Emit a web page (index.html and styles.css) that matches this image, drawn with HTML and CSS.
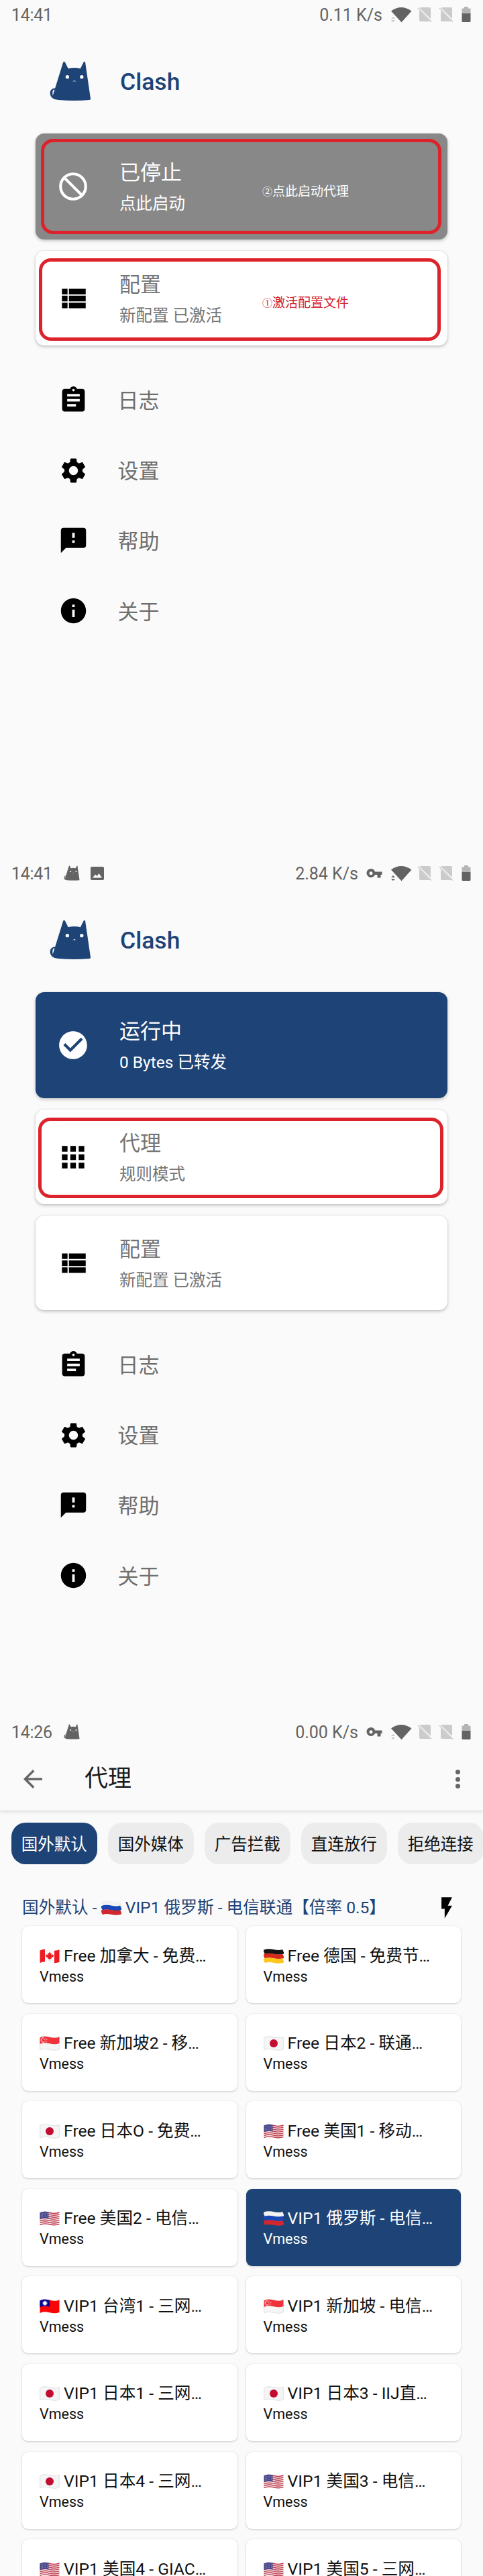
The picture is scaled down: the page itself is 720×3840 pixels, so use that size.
FILE: index.html
```html
<!DOCTYPE html>
<html lang="zh-CN">
<head>
<meta charset="utf-8">
<title>Clash</title>
<link rel="stylesheet" href="styles.css">
</head>
<body>
<svg class="sprite" aria-hidden="true">
  <symbol id="cat" viewBox="222 300 188 182">
    <path fill="currentColor" d="M283 306Q287 299 292 306L306 334Q334 327 361 334L375 306Q380 299 383 306L388 340 407 470Q408 475 402 476 335 482 262 476C236 474 224 462 224 445 224 430 236 421 248 423 252 425 246 429 238 431 234 438 235 447 236 457 246 461 260 461Q264 390 275 335Z"/>
    <circle cx="302" cy="372" r="8" fill="#fafafa"/><circle cx="367" cy="372" r="8" fill="#fafafa"/>
    <path fill="#fafafa" d="M324 392Q332 391 334 387 336 391 344 392Z"/>
  </symbol>
  <symbol id="image" viewBox="0 0 20 20"><path fill="currentColor" fill-rule="evenodd" d="M2 0h16q2 0 2 2v16q0 2-2 2H2q-2 0-2-2V2q0-2 2-2zM3 16.5h14L12.5 10 9.500 14 7 11.500z"/></symbol>
  <symbol id="key" viewBox="0 0 24 14"><path fill="currentColor" fill-rule="evenodd" d="M7 0a6.500 6.500 0 0 1 6 4.500h10.500v4.500h-2v4.500h-5V9H13A6.500 6.500 0 1 1 7 0zm0 4.200a2.500 2.500 0 1 0 0 5 2.500 2.500 0 0 0 0-5z"/></symbol>
  <symbol id="signals" viewBox="580 9 124 24">
    <path fill="#636363" d="M583 15.500Q598 4.500 613.500 15.500L598.500 32.300z"/>
    <g fill="#cbcbcb"><path d="M628 10h12q2 0 2 2v15l-17-16.500zM625 14.500l16.500 16.500H627q-2 0-2-2z"/><path d="M623 11l20 20.500" stroke="#cbcbcb" stroke-width="1.500"/>
    <path d="M660 10h12q2 0 2 2v15l-17-16.500zM657 14.500l16.500 16.500H659q-2 0-2-2z"/><path d="M655 11l20 20.500" stroke="#cbcbcb" stroke-width="1.500"/></g>
    <path fill="#b5b5b5" d="M692 9h6v2.500h3.500V20h-13v-8.500h3.500z"/><path fill="#636363" d="M688.500 19h13v11.500q0 1.500-1.500 1.500h-10q-1.500 0-1.500-1.500z"/>
  </symbol>
  <symbol id="traffic" viewBox="0 0 6 8"><path fill="currentColor" d="M0 3l3-3 3 3zM0 5h6L3 8z"/></symbol>
  <symbol id="block" viewBox="0 0 24 24"><circle cx="12" cy="12" r="9" fill="none" stroke="currentColor" stroke-width="2"/><path d="M5.700 5.700l12.600 12.600" stroke="currentColor" stroke-width="2"/></symbol>
  <symbol id="check" viewBox="0 0 24 24"><path fill="currentColor" d="M12 2C6.480 2 2 6.480 2 12s4.480 10 10 10 10-4.480 10-10S17.520 2 12 2zm-2 15l-5-5 1.410-1.410L10 14.170l7.590-7.590L19 8l-9 9z"/></symbol>
  <symbol id="list" viewBox="0 0 24 24"><path fill="currentColor" d="M4 14h4v-4H4v4zm0 5h4v-4H4v4zM4 9h4V5H4v4zm5 5h12v-4H9v4zm0 5h12v-4H9v4zM9 5v4h12V5H9z"/></symbol>
  <symbol id="apps" viewBox="0 0 24 24"><path fill="currentColor" d="M4 8h4V4H4v4zm6 12h4v-4h-4v4zm-6 0h4v-4H4v4zm0-6h4v-4H4v4zm6 0h4v-4h-4v4zm6-10v4h4V4h-4zm-6 4h4V4h-4v4zm6 6h4v-4h-4v4zm0 6h4v-4h-4v4z"/></symbol>
  <symbol id="log" viewBox="0 0 24 24"><path fill="currentColor" d="M19 3h-4.180C14.400 1.840 13.300 1 12 1c-1.300 0-2.400.84-2.820 2H5c-1.100 0-2 .9-2 2v14c0 1.100.9 2 2 2h14c1.100 0 2-.9 2-2V5c0-1.100-.9-2-2-2zm-7 0c.55 0 1 .45 1 1s-.45 1-1 1-1-.45-1-1 .45-1 1-1zm2 14H7v-2h7v2zm3-4H7v-2h10v2zm0-4H7V7h10v2z"/></symbol>
  <symbol id="gear" viewBox="0 0 24 24"><path fill="currentColor" d="M19.140 12.940c.04-.3.06-.61.06-.94 0-.32-.02-.64-.07-.94l2.030-1.580c.18-.14.23-.41.12-.61l-1.920-3.320c-.12-.22-.37-.29-.59-.22l-2.390.96c-.5-.38-1.030-.7-1.620-.94L14.400 2.810c-.04-.24-.24-.41-.48-.41h-3.840c-.24 0-.43.17-.47.41L9.250 5.350C8.660 5.590 8.120 5.920 7.630 6.290L5.240 5.330c-.22-.08-.47 0-.59.22L2.740 8.870c-.12.21-.08.47.12.61l2.030 1.580C4.840 11.360 4.800 11.690 4.800 12s.02.64.07.94l-2.030 1.580c-.18.14-.23.41-.12.61l1.920 3.320c.12.22.37.29.59.22l2.390-.96c.5.38 1.030.7 1.620.94l.36 2.540c.05.24.24.41.48.41h3.840c.24 0 .44-.17.47-.41l.36-2.540c.59-.24 1.130-.56 1.620-.94l2.390.96c.22.08.47 0 .59-.22l1.920-3.320c.12-.22.07-.47-.12-.61L19.140 12.940zM12 15.600c-1.980 0-3.600-1.620-3.600-3.600s1.620-3.600 3.600-3.600 3.600 1.620 3.600 3.600-1.620 3.600-3.600 3.600z"/></symbol>
  <symbol id="help" viewBox="0 0 24 24"><path fill="currentColor" d="M20 2H4c-1.100 0-1.990.9-1.990 2L2 22l4-4h14c1.100 0 2-.9 2-2V4c0-1.100-.9-2-2-2zm-7 12h-2v-2h2v2zm0-4h-2V6h2v4z"/></symbol>
  <symbol id="info" viewBox="0 0 24 24"><path fill="currentColor" d="M12 2C6.480 2 2 6.480 2 12s4.480 10 10 10 10-4.480 10-10S17.520 2 12 2zm1 15h-2v-6h2v6zm0-8h-2V7h2v2z"/></symbol>
  <symbol id="back" viewBox="0 0 24 24"><path fill="currentColor" d="M20 11H7.830l5.590-5.590L12 4l-8 8 8 8 1.410-1.410L7.830 13H20v-2z"/></symbol>
  <symbol id="bolt" viewBox="0 0 24 24"><path fill="currentColor" d="M7 2v11h3v9l7-12h-4l4-8z"/></symbol>

  <symbol id="ru" viewBox="0 0 30 22"><g fill="none" stroke-width="6.700"><path stroke="#f2f2f2" d="M.5 5.200c5-2.500 9-2 14.500-.7s10 1.500 14.500-.5"/><path stroke="#1a47b8" d="M.5 11.700c5-2.500 9-2 14.500-.7s10 1.500 14.500-.5"/><path stroke="#d0282e" d="M.5 18.200c5-2.500 9-2 14.500-.7s10 1.500 14.500-.5"/></g></symbol>
  <symbol id="de" viewBox="0 0 30 22"><g fill="none" stroke-width="6.700"><path stroke="#151515" d="M.5 5.200c5-2.500 9-2 14.500-.7s10 1.500 14.500-.5"/><path stroke="#d52b1e" d="M.5 11.700c5-2.500 9-2 14.500-.7s10 1.500 14.500-.5"/><path stroke="#ffc61e" d="M.5 18.200c5-2.500 9-2 14.500-.7s10 1.500 14.500-.5"/></g></symbol>
  <symbol id="ca" viewBox="0 0 30 22"><path fill="#f7f7f7" d="M.5 2.500c5-2.500 9-2 14.500-.7s10 1.500 14.500-.5v18.500c-4.500 2-9 1.800-14.500.5s-9.500-1.800-14.500.7z"/><path fill="#ed1c24" d="M.5 2.500Q4.500.6 8 .7v18.500q-4 0-7.500 1.800zM22 2.700q4.500.2 7.500-1.400v18.500q-3.500 1.600-7.500 1.400zM15 4.500l1.200 2.200 1.500-.5-.5 3.500 2.300-1.600.3 1.400 1.700-.1-1 2.200-3.300 2.500.2 1.200-2-.3v2.500h-.8V15l-2 .3.200-1.200-3.300-2.500-1-2.200 1.700.1.300-1.400 2.300 1.600-.5-3.500 1.500.5z"/></symbol>
  <symbol id="jp" viewBox="0 0 30 22"><path fill="#f5f5f5" stroke="#d4d4d4" stroke-width=".7" d="M.7 2.500c5-2.500 9-2 14.300-.7s10 1.500 14.300-.5v18.500c-4.500 2-9 1.800-14.300.5s-9.500-1.800-14.300.7z"/><circle cx="15" cy="11" r="6" fill="#c20c32"/></symbol>
  <symbol id="sg" viewBox="0 0 30 22"><path fill="#f5f5f5" stroke="#d4d4d4" stroke-width=".7" d="M.7 2.500c5-2.500 9-2 14.300-.7s10 1.500 14.300-.5v18.500c-4.500 2-9 1.800-14.300.5s-9.500-1.800-14.300.7z"/><path fill="#f0323c" d="M.5 2.500c5-2.500 9-2 14.500-.7s10 1.500 14.500-.5v9.500c-4.500 2-9 1.800-14.500.5s-9.500-1.800-14.500.7z"/><path fill="none" stroke="#fff" d="M6.500 3a3.200 3.200 0 1 0 0 6"/><g fill="#fff"><circle cx="9" cy="3.800" r=".6"/><circle cx="7.200" cy="5.500" r=".6"/><circle cx="10.800" cy="5.500" r=".6"/><circle cx="8" cy="7.800" r=".6"/><circle cx="10" cy="7.800" r=".6"/></g></symbol>
  <symbol id="tw" viewBox="0 0 30 22"><path fill="#fa0505" d="M.5 2.500c5-2.500 9-2 14.500-.7s10 1.500 14.500-.5v18.500c-4.500 2-9 1.800-14.500.5s-9.500-1.800-14.500.7z"/><path fill="#00089a" d="M.5 2.500c5-2.500 9-2 14.500-.7v9.700c-5-1.300-9.500-1.800-14.500.7z"/><circle cx="8" cy="6.300" r="2.700" fill="#fff"/><circle cx="8" cy="6.300" r="3.200" fill="none" stroke="#fff" stroke-dasharray="1 .7" stroke-width=".8"/></symbol>
  <symbol id="us" viewBox="0 0 30 22"><path fill="#f3eeee" d="M.5 2.500c5-2.500 9-2 14.500-.7s10 1.500 14.500-.5v18.500c-4.500 2-9 1.800-14.500.5s-9.500-1.800-14.500.7z"/><g fill="none" stroke="#bf3548" stroke-width="1.450"><path d="M.5 3.200c5-2.500 9-2 14.500-.7s10 1.500 14.500-.5"/><path d="M.5 6.100c5-2.500 9-2 14.500-.7s10 1.500 14.500-.5"/><path d="M.5 9c5-2.500 9-2 14.500-.7s10 1.500 14.500-.5"/><path d="M.5 11.900c5-2.500 9-2 14.500-.7s10 1.500 14.500-.5"/><path d="M.5 14.800c5-2.500 9-2 14.500-.7s10 1.500 14.500-.5"/><path d="M.5 17.700c5-2.500 9-2 14.500-.7s10 1.500 14.500-.5"/><path d="M.5 20.500c5-2.500 9-2 14.500-.7s10 1.500 14.500-.5"/></g><path fill="#46488c" d="M.5 2.500c5-2.500 9-2 13-1.100v10c-4-1-8-1.400-13 .9z"/><path fill="none" stroke="#c5c6dc" stroke-width=".8" stroke-dasharray=".8 1.500" d="M2 4.500q5-2 11-.7M2 7q5-2 11-.7M2 9.500q5-2 11-.7"/></symbol>
</svg>

<section class="screen">
  <header class="status">
    <span class="clock">14:41</span>
    <span class="rate">0.11 K/s</span>
    <span class="signal"><svg class="signals"><use href="#signals"/></svg><svg class="traffic idle"><use href="#traffic"/></svg></span>
  </header>
  <div class="brand"><svg class="logo"><use href="#cat"/></svg><h1>Clash</h1></div>
  <div class="cards">
    <article class="card state stopped">
      <svg class="lead"><use href="#block"/></svg>
      <div class="copy"><h2>已停止</h2><p>点此启动</p></div>
      <div class="frame frame-start"></div>
      <span class="note note-start"><i>②</i>点此启动代理</span>
    </article>
    <article class="card">
      <svg class="lead"><use href="#list"/></svg>
      <div class="copy"><h2>配置</h2><p>新配置 已激活</p></div>
      <div class="frame frame-config"></div>
      <span class="note note-config"><i>①</i>激活配置文件</span>
    </article>
  </div>
  <nav class="menu">
    <a><svg><use href="#log"/></svg><span>日志</span></a>
    <a><svg><use href="#gear"/></svg><span>设置</span></a>
    <a><svg><use href="#help"/></svg><span>帮助</span></a>
    <a><svg><use href="#info"/></svg><span>关于</span></a>
  </nav>
</section>

<section class="screen">
  <header class="status">
    <span class="clock">14:41</span>
    <svg class="mini-cat"><use href="#cat"/></svg><svg class="mini-image"><use href="#image"/></svg>
    <span class="rate">2.84 K/s</span>
    <svg class="key"><use href="#key"/></svg>
    <span class="signal"><svg class="signals"><use href="#signals"/></svg><svg class="traffic"><use href="#traffic"/></svg></span>
  </header>
  <div class="brand"><svg class="logo"><use href="#cat"/></svg><h1>Clash</h1></div>
  <div class="cards">
    <article class="card state running">
      <svg class="lead"><use href="#check"/></svg>
      <div class="copy"><h2>运行中</h2><p>0 Bytes 已转发</p></div>
    </article>
    <article class="card">
      <svg class="lead"><use href="#apps"/></svg>
      <div class="copy"><h2>代理</h2><p>规则模式</p></div>
      <div class="frame frame-proxy"></div>
    </article>
    <article class="card">
      <svg class="lead"><use href="#list"/></svg>
      <div class="copy"><h2>配置</h2><p>新配置 已激活</p></div>
    </article>
  </div>
  <nav class="menu">
    <a><svg><use href="#log"/></svg><span>日志</span></a>
    <a><svg><use href="#gear"/></svg><span>设置</span></a>
    <a><svg><use href="#help"/></svg><span>帮助</span></a>
    <a><svg><use href="#info"/></svg><span>关于</span></a>
  </nav>
</section>

<section class="screen">
  <header class="status">
    <span class="clock">14:26</span>
    <svg class="mini-cat"><use href="#cat"/></svg>
    <span class="rate">0.00 K/s</span>
    <svg class="key"><use href="#key"/></svg>
    <span class="signal"><svg class="signals"><use href="#signals"/></svg><svg class="traffic idle"><use href="#traffic"/></svg></span>
  </header>
  <div class="toolbar"><svg class="back"><use href="#back"/></svg><h1>代理</h1><div class="more"><b></b><b></b><b></b></div></div>
  <div class="chips"><span class="chip on">国外默认</span><span class="chip">国外媒体</span><span class="chip">广告拦截</span><span class="chip">直连放行</span><span class="chip">拒绝连接</span></div>
  <div class="group"><span>国外默认 - <svg class="flag"><use href="#ru"/></svg> VIP1 俄罗斯 - 电信联通【倍率 0.5】</span><svg class="bolt"><use href="#bolt"/></svg></div>
  <div class="nodes">
    <article class="node"><h3><svg class="flag"><use href="#ca"/></svg> Free 加拿大 - 免费…</h3><p>Vmess</p></article>
    <article class="node"><h3><svg class="flag"><use href="#de"/></svg> Free 德国 - 免费节…</h3><p>Vmess</p></article>
    <article class="node"><h3><svg class="flag"><use href="#sg"/></svg> Free 新加坡2 - 移…</h3><p>Vmess</p></article>
    <article class="node"><h3><svg class="flag"><use href="#jp"/></svg> Free 日本2 - 联通…</h3><p>Vmess</p></article>
    <article class="node"><h3><svg class="flag"><use href="#jp"/></svg> Free 日本O - 免费…</h3><p>Vmess</p></article>
    <article class="node"><h3><svg class="flag"><use href="#us"/></svg> Free 美国1 - 移动…</h3><p>Vmess</p></article>
    <article class="node"><h3><svg class="flag"><use href="#us"/></svg> Free 美国2 - 电信…</h3><p>Vmess</p></article>
    <article class="node on"><h3><svg class="flag"><use href="#ru"/></svg> VIP1 俄罗斯 - 电信…</h3><p>Vmess</p></article>
    <article class="node"><h3><svg class="flag"><use href="#tw"/></svg> VIP1 台湾1 - 三网…</h3><p>Vmess</p></article>
    <article class="node"><h3><svg class="flag"><use href="#sg"/></svg> VIP1 新加坡 - 电信…</h3><p>Vmess</p></article>
    <article class="node"><h3><svg class="flag"><use href="#jp"/></svg> VIP1 日本1 - 三网…</h3><p>Vmess</p></article>
    <article class="node"><h3><svg class="flag"><use href="#jp"/></svg> VIP1 日本3 - IIJ直…</h3><p>Vmess</p></article>
    <article class="node"><h3><svg class="flag"><use href="#jp"/></svg> VIP1 日本4 - 三网…</h3><p>Vmess</p></article>
    <article class="node"><h3><svg class="flag"><use href="#us"/></svg> VIP1 美国3 - 电信…</h3><p>Vmess</p></article>
    <article class="node"><h3><svg class="flag"><use href="#us"/></svg> VIP1 美国4 - GIAC…</h3></article>
    <article class="node"><h3><svg class="flag"><use href="#us"/></svg> VIP1 美国5 - 三网…</h3></article>
  </div>
</section>
</body>
</html>
```
FILE: styles.css
```css
* { box-sizing: border-box; margin: 0; padding: 0; }
body {
  width: 720px;
  background: #fafafa;
  color: #111;
  font-family: Roboto, "Noto Sans CJK SC", sans-serif;
}
svg { display: block; flex: none; }
h1, h2, h3 { font-weight: 400; }
.sprite { position: absolute; width: 0; height: 0; }
.screen { height: 1280px; overflow: hidden; }

.status {
  display: flex;
  align-items: center;
  height: 45px;
  padding: 0 16px 2px 17px;
  color: #636363;
  font-size: 25px;
  line-height: 30px;
}
.clock { width: 61px; padding-top: 3px; white-space: nowrap; letter-spacing: -.3px; }
.rate { margin-left: auto; padding-top: 3px; white-space: nowrap; }
.mini-cat { width: 24px; height: 23px; margin-left: 17px; }
.mini-image { width: 20px; height: 20px; margin-left: 16px; }
.key { width: 24px; height: 14px; margin-left: 12px; }
.signal { position: relative; margin-left: 10px; }
.signals { width: 124px; height: 24px; }
.traffic { position: absolute; left: 3px; top: 15px; width: 6px; height: 8px; }
.traffic.idle { color: #cbcbcb; }

.brand {
  display: flex;
  align-items: center;
  height: 154px;
  padding: 0 0 3px 74px;
  color: #1e4376;
}
.logo { width: 62px; height: 60px; }
.brand h1 { margin-left: 43px; padding-top: 3px; font-size: 35.5px; font-weight: 500; line-height: 44px; }

.cards { display: grid; gap: 17px; padding: 0 53px; }
.card {
  position: relative;
  display: flex;
  align-items: center;
  gap: 44px;
  height: 141px;
  padding-left: 31px;
  border-radius: 13px;
  background: #fff;
  color: #757575;
  box-shadow: 0 2px 5px rgba(0, 0, 0, .22), 0 0 2px rgba(0, 0, 0, .12);
}
.card.state { height: 158px; color: #fff; }
.state.stopped { background: #888; }
.state.running { background: #1e4376; }
.lead { width: 50px; height: 50px; color: #000; }
.state .lead { color: #fff; }
.copy { padding-top: 6px; }
.copy h2 { font-size: 31px; line-height: 46px; }
.copy p { font-size: 24.5px; line-height: 46px; }
.frame { position: absolute; border: 5px solid #dc232b; border-radius: 18px; }
.frame-start { inset: 8px 9px 8px 8px; }
.frame-config { inset: 11px 10px 7px 5px; }
.frame-proxy { inset: 12px 6px 9px 4px; }
.note {
  position: absolute;
  left: 338px;
  display: flex;
  font-size: 19px;
  line-height: 24px;
  white-space: nowrap;
}
.note i { width: 15px; font-size: 15px; font-style: normal; }
.note-start { top: 75px; }
.note-config { top: 66px; color: #d3222f; }

.menu { padding-top: 29px; }
.menu a {
  display: flex;
  align-items: center;
  gap: 44px;
  height: 104.8px;
  padding-left: 86.5px;
  color: #6e6e6e;
  font-size: 31px;
}
.menu span { padding-bottom: 3px; }
.menu svg { width: 45px; height: 45px; color: #000; }

.toolbar {
  display: flex;
  align-items: center;
  height: 95px;
  padding: 0 34px 0 28px;
  border-bottom: 1px solid #d8d8d8;
  box-shadow: 0 2px 5px rgba(0, 0, 0, .08);
  color: #666;
}
.back { width: 42px; height: 42px; }
.toolbar h1 { margin-left: 56px; color: #1b1b1b; font-size: 35px; line-height: 44px; }
.more { display: grid; gap: 3.500px; margin-left: auto; }
.more b { width: 7px; height: 7px; border-radius: 50%; background: #666; }

.chips { display: flex; gap: 16.500px; height: 79px; padding: 17px 0 0 17px; }
.chip {
  flex: none;
  width: 127.500px;
  height: 62px;
  border-radius: 21px;
  background: #ececec;
  font-size: 24.5px;
  line-height: 65px;
  text-align: center;
}
.chip.on { background: #1e4376; color: #fff; }

.group {
  display: flex;
  align-items: center;
  justify-content: space-between;
  height: 92px;
  padding: 38px 35px 0 33px;
  color: #1e4376;
  font-size: 24.65px;
  line-height: 40px;
  white-space: nowrap;
}
.bolt { width: 38px; height: 38px; color: #000; }
.flag { display: inline-block; width: 30px; height: 22px; vertical-align: -3px; }

.nodes {
  display: grid;
  grid-template-columns: 320.5px 320.5px;
  grid-auto-rows: 115px;
  gap: 15.6px 13px;
  padding: 0 33px;
}
.node {
  padding: 27.5px 0 0 26px;
  border-radius: 9px;
  background: #fff;
  box-shadow: 0 1px 3px rgba(0, 0, 0, .18), 0 0 1px rgba(0, 0, 0, .12);
  white-space: nowrap;
}
.node.on { background: #1e4376; color: #fff; }
.node h3 { font-size: 24.65px; line-height: 34px; }
.node p { padding-top: 1px; font-size: 21.5px; line-height: 26px; }
```
